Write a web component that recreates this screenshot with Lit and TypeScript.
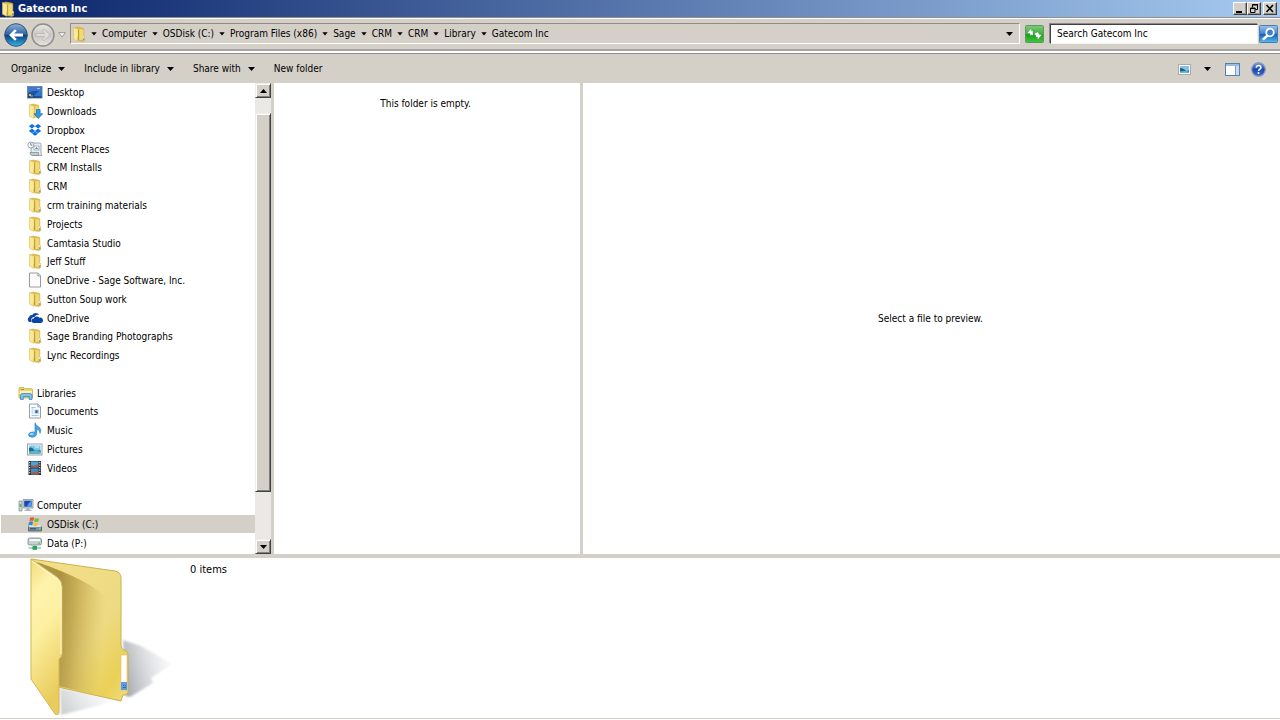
import { LitElement, html, svg, css } from "lit";
import { customElement } from "lit/decorators.js";

const arrow = html`<svg class="arrow" width="7" height="4" viewBox="0 0 7 4" aria-hidden="true"><path d="M0 0h7L3.5 4z" fill="#000" /></svg>`;
const crumbArrow = html`<svg class="arrow" width="6" height="4" viewBox="0 0 6 4" aria-hidden="true"><path d="M0.3 0.3h5.4L3 3.6z" fill="#000" /></svg>`;

const icons: Record<string, unknown> = {
  folder: svg`
    <path d="M3 2 6 1l6 1.200q.8.2.8 1v6.600l.8.800v4l-1.600.8L6 14.600z" fill="#dcbc4c" stroke="#cdae48" stroke-width=".6"/>
    <path d="M8.300 3 12.300 3.500v10.200L8.300 14z" fill="#f0d978"/>
    <path d="M2.500 1.500 6.400 3q.8.5.8 1.300v6.200l-.5.700v4L2.500 13.200z" fill="#faea98" stroke="#dcc05a" stroke-width=".6"/>
    <path d="M7.500 4v10" stroke="#b8962e" stroke-width=".8"/>
    <path d="M12.300 10.500h1v1.800h-1z" fill="#fff"/><path d="M12.300 12.300h1v1.600h-1z" fill="#5a8fc8"/>`,
  desktop: svg`
    <rect x=".5" y="2.500" width="14.500" height="11.500" fill="#1d4fa0" stroke="#6c87b0"/>
    <path d="M1 3h13.500v5Q8 5 1 9z" fill="#3f79cf"/><path d="M6 13.500Q10 7 14.500 6v7.500z" fill="#2f8be0" opacity=".7"/>
    <path d="M1 12.500h13.500v1H1z" fill="#16264a"/><path d="M2 10h2v2H2z" fill="#e8c24a"/><path d="M3 11.500h3v1H3z" fill="#8fd36a"/>
    <path d="M10 4h3v1h-3z" fill="#9fc4f0"/>`,
  downloads: svg`
    <path d="M3 2 6 1l5 1.200q.8.2.8 1V14L6 14.600z" fill="#dcbc4c" stroke="#cdae48" stroke-width=".6"/>
    <path d="M8.300 3 11.500 3.500v10L8.300 14z" fill="#f0d978"/>
    <path d="M2.500 1.500 6.400 3q.8.5.8 1.300v6.200l-.5.700v4L2.500 13.200z" fill="#faea98" stroke="#dcc05a" stroke-width=".6"/>
    <path d="M9.500 6.500h3.600v4.200h2.500L11.300 15.500 7 10.700h2.500z" fill="#2c9be6" stroke="#1769ad" stroke-width=".7"/>`,
  dropbox: svg`<g fill="#0d6fea"><path d="M5 2 8.200 4.300 5 6.600 1.800 4.300z"/><path d="M11 2 14.200 4.300 11 6.600 7.800 4.300z"/><path d="M5 6.600 8.200 8.900 5 11.200 1.800 8.900z"/><path d="M11 6.600 14.200 8.900 11 11.200 7.800 8.900z"/><path d="M8 9.600 11 11.700 8 13.800 5 11.700z"/></g>
    <path d="M8 4.600 10.800 6.600 8 8.600 5.200 6.600z" fill="#fff"/>`,
  recent: svg`
    <path d="M4.500 2h8q1.500 0 1.500 1.500v9l1 2H6l-2-2z" fill="#e8edf1" stroke="#8d989f" stroke-width=".8"/>
    <path d="M7 5h5v4H7z" fill="#fff" stroke="#7f97a6" stroke-width=".7"/><path d="M8 8 9.500 6l1 1 1 1z" fill="#5d8fae"/>
    <path d="M3 11.500h8.500v3H5q-2-.5-2-3z" fill="#c2ccd2" stroke="#77838b" stroke-width=".7"/>
    <circle cx="3.800" cy="4" r="3" fill="#f5fafc" stroke="#849199" stroke-width=".8"/><path d="M3.800 2v2.200h1.600" fill="none" stroke="#456" stroke-width=".7"/>`,
  file: svg`<path d="M2.500 1h8.500L13.500 3.800V15h-11z" fill="#fdfdfd" stroke="#8f8f8f" stroke-width=".9"/><path d="M10.800 1.200V4h2.600" fill="#e4e4e4" stroke="#8f8f8f" stroke-width=".8"/>`,
  onedrive: svg`
    <path d="M2.500 12A2.700 2.700 0 0 1 2 7.200 3 3 0 0 1 5.200 5 4 4 0 0 1 12.200 5q-3.200-1-4.700 2-3.500.3-3.500 3.400 0 1 .5 1.600z" fill="#0a46a8"/>
    <path d="M6.500 13A2.300 2.300 0 0 1 6.800 8.400 3.200 3.200 0 0 1 12.400 7.800 2.700 2.700 0 0 1 14 13z" fill="#0a46a8"/>`,
  libraries: svg`
    <path d="M1 3.500q0-1 1-1h4l1 1.200h6.500q1 0 1 1V13H1z" fill="#f1d472" stroke="#c9a545" stroke-width=".8"/>
    <path d="M1.500 6h12.500v3H1.500z" fill="#fff1b0"/><path d="M3 4h3v1H3z" fill="#62ad58"/>
    <path d="M2.500 14.500V10.500q0-2 2-2h7.500q2 0 2 2v4h-2.800V11.500H5.300v3z" fill="#7ec2ee" stroke="#3c88bd" stroke-width=".8"/>`,
  documents: svg`<path d="M2.500 1h8.500L13.500 3.800V15h-11z" fill="#fcfdff" stroke="#8795a3" stroke-width=".9"/><path d="M10.800 1.200V4h2.600" fill="#dce4ec" stroke="#8795a3" stroke-width=".8"/>
    <path d="M4.500 4.500h4M4.500 6h2M4.500 8h2M4.500 10h2M4.500 12.500h7" stroke="#8fb0cf" stroke-width=".8"/><path d="M7.500 6.500h4.300v4.300H7.500z" fill="#a8cdf0"/><path d="M8.400 7.300h2.200v2.600H8.400z" fill="#2a5f9d"/>`,
  music: svg`<path d="M8 .8q.5 2.500 3.500 4 3.500 2 1.500 6.700.3-3.500-3.300-4.200V12Q9 15 5.500 15.200 1.500 15 1.500 12.700 2 10 5.500 9.900q1.500 0 2.500.5z" fill="#3fa6e6" stroke="#1f77b8" stroke-width=".6"/><ellipse cx="4.600" cy="12" rx="2" ry="1.100" fill="#a5dafa"/>`,
  pictures: svg`<rect x=".5" y="3" width="14.500" height="11" fill="#fafafa" stroke="#8f979e" stroke-width=".9"/><path d="M2 4.500h11.500v8H2z" fill="#79c5ef"/><path d="M2 7q3-1.500 4.500 1.200T13.500 9v3.500H2z" fill="#1e6a86"/><path d="M2 10.500q5-1.500 11.500 0v2H2z" fill="#57b8c8"/><path d="M8 5.500h4v1H8z" fill="#e9f7ff"/>`,
  videos: svg`<rect x="1.500" y="1" width="12.500" height="14" fill="#283038"/><path d="M4 1.500h7.500v6H4z" fill="#4da3d8"/><path d="M4 8.500h7.500v6H4z" fill="#3c8cc8"/><path d="M4 5q3 2 7.500-1v3.500H4zM4 12q4 2 7.500-1v3.500H4z" fill="#a65a38"/>
    <path d="M2.700 2v12.500M12.800 2v12.500" stroke="#dfe5ea" stroke-width="1.100" stroke-dasharray="1.200 1.300"/>`,
  computer: svg`<path d="M5 2.500h10v8.500H5z" fill="#d6dbe0" stroke="#84909a" stroke-width=".8"/><path d="M6.200 3.700h7.600v6H6.200z" fill="#1546b4"/><path d="M9 9.700q1-4.500 4.800-6v6z" fill="#5d94ea"/><path d="M8.500 11h3v1.800h2V14h-7v-1.200h2z" fill="#aab3ba"/>
    <path d="M1 4h3v10H1z" fill="#cdd4d8" stroke="#7c8890" stroke-width=".7"/><path d="M1.500 7h2v3h-2z" fill="#4fc05a"/>`,
  osdisk: svg`<path d="M1.500 10.500h13V15h-13z" fill="#7c94a8" stroke="#4d5b66" stroke-width=".8"/><path d="M3 9h10l1.500 2h-13z" fill="#dce3e8"/><path d="M3 12.300h6v1H3z" fill="#2f4558"/><path d="M12 12h1.500v1.500H12z" fill="#56e356"/>
    <path d="M3.200 1.800q2-1.200 4-.2L6.300 5q-2-1-4 .2z" fill="#e8562c"/><path d="M8 2q2 1 4.200 0l-1 3.600q-2 .8-4-.2z" fill="#79b83a"/><path d="M2.100 6q2-1.200 4-.2L5.200 9.400q-2-1-4 .2z" fill="#3c86d8"/><path d="M6.900 6.200q2 1 4.200 0l-1 3.600q-2 .8-4-.2z" fill="#f6c22e"/>`,
  data: svg`<path d="M1 5q0-2 2-2h9.500q2 0 2 2v3.500q0 1.500-2 1.500H3q-2 0-2-1.500z" fill="#c9cfd3" stroke="#76818a" stroke-width=".8"/><path d="M2.500 4.300h10.500v1.600H2.500z" fill="#fff"/><path d="M11 7.500h2v1.200h-2z" fill="#45d14c"/>
    <path d="M6.500 10h2.500v2H14v1.800H1.500V12h5z" fill="#9bd7ae"/><path d="M5.500 11h4.500v3.800H5.500z" fill="#28a35a"/>`,
};

const icon = (name: string) => html`<svg class="icon" width="16" height="16" viewBox="0 0 16 16" aria-hidden="true">${icons[name]}</svg>`;

type Row = { label: string; icon: string; root?: boolean; selected?: boolean } | null;
const f = (label: string, name = "folder"): Row => ({ label, icon: name });
const rows: Row[] = [
  f("Desktop", "desktop"), f("Downloads", "downloads"), f("Dropbox", "dropbox"), f("Recent Places", "recent"),
  f("CRM Installs"), f("CRM"), f("crm training materials"), f("Projects"), f("Camtasia Studio"), f("Jeff Stuff"),
  f("OneDrive - Sage Software, Inc.", "file"), f("Sutton Soup work"), f("OneDrive", "onedrive"),
  f("Sage Branding Photographs"), f("Lync Recordings"), null,
  { label: "Libraries", icon: "libraries", root: true },
  f("Documents", "documents"), f("Music", "music"), f("Pictures", "pictures"), f("Videos", "videos"), null,
  { label: "Computer", icon: "computer", root: true },
  { label: "OSDisk (C:)", icon: "osdisk", selected: true }, f("Data (P:)", "data"),
];
const crumbs = ["Computer", "OSDisk (C:)", "Program Files (x86)", "Sage", "CRM", "CRM", "Library", "Gatecom Inc"];

@customElement("app-root")
export class AppRoot extends LitElement {
  static styles = css`
    :host { display: flex; flex-direction: column; height: 100vh; background: #fff; color: #000;
      font: 10px/14px "DejaVu Sans Condensed", "DejaVu Sans", sans-serif; }
    *, *::before { box-sizing: border-box; }
    button { font: inherit; color: inherit; background: none; border: 0; padding: 0; margin: 0; display: flex; align-items: center; white-space: nowrap; }
    svg { display: block; flex: none; }

    .title { display: flex; align-items: center; height: 17px; flex: none; padding-right: 3px;
      background: linear-gradient(90deg, #0a246a, #a6caf0); }
    .title h1 { margin: 0; flex: 1; font-size: 11px; font-weight: bold; line-height: 16px; color: #fff; }
    .title .icon { margin-right: 2px; }
    .win { width: 14px; height: 13px; justify-content: center; background: #d4d0c8; border: 1px solid; border-color: #fff #404040 #404040 #fff; box-shadow: inset -1px -1px #9a968e; }
    .close { margin-left: 2px; }

    .nav { display: flex; align-items: center; flex: none; height: 34px; background: #d4d0c8; padding: 0 2px 0 4px;
      border-top: 1px solid #8e8e8e; border-bottom: 2px solid #a8a6a2; box-shadow: inset 0 1px #fff; }
    .history { margin-right: 4px; padding-top: 2px; gap: 3px; display: flex; align-items: center; }
    .wheel { border-radius: 50%; }
    .address { display: flex; align-items: center; flex: 1; height: 21px; padding-right: 6px;
      border: 1px solid; border-color: #8f8c86 #fff #fff #8f8c86; }
    .address ol { display: flex; list-style: none; margin: 0 auto 0 4px; padding: 0; }
    .address li { display: flex; align-items: center; gap: 4px; margin-right: 5px; }
    .address a { color: inherit; text-decoration: none; white-space: nowrap; }
    .refresh { width: 19px; margin: 0 6px 0 5px; }
    .search { flex: 0 0 208px; display: flex; }
    .search input { width: 100%; height: 20px; font: inherit; color: #000; padding: 0 6px; border: 1px solid; outline: 0; border-radius: 0; background: #fff;
      border-color: #404040 #f4f2ee #f4f2ee #404040; box-shadow: -1px -1px #8a8a8a; }
    .search input::placeholder { color: #000; opacity: 1; }
    .go { margin-left: 1px; }

    .tools { display: flex; align-items: center; flex: none; height: 32px; padding: 2px 14px 0 11px; gap: 19px; background: #d4d0c8;
      border-top: 2px solid #fff; box-shadow: inset 0 1px #8e8e8e; }
    .tools button { gap: 7px; }
    .tools .view { margin-left: auto; gap: 13px; margin-right: -5px; }
    .tools .help { margin-left: -8px; }

    .body { display: flex; flex: 1; min-height: 0; }
    .tree { display: flex; flex-direction: column; width: 255px; flex: none; list-style: none; margin: 0; padding: 0 0 2px; }
    .tree li { flex: 1; min-height: 0; display: flex; align-items: center; }
    .tree a { display: flex; align-items: center; gap: 4px; flex: 1; height: 100%; margin-left: 1px; padding-left: 26px; color: inherit; text-decoration: none; white-space: nowrap; }
    .tree a.root { padding-left: 17px; gap: 3px; }
    .tree a.selected { background: #d4d0c8; }
    .tree span { padding-top: 2px; }

    .scroll { display: flex; flex-direction: column; width: 16px; flex: none; background: #ebe9e5; }
    .raised { background: #d4d0c8; border: 1px solid; border-color: #f0eeea #404040 #404040 #f0eeea; box-shadow: inset 1px 1px #fff, inset -1px -1px #808080; }
    .scroll button { height: 15px; flex: none; justify-content: center; }
    .before { flex: 15; }
    .thumb { flex: 378; }
    .after { flex: 47; }
    .split { width: 3px; flex: none; background: #d4d0c8; }

    .list { flex: 0 0 306px; text-align: center; padding: 14px 3px 0 0; }
    .list p, .preview p { margin: 0; }
    .preview { flex: 1; display: grid; place-items: center; padding-right: 2px; }

    .details { display: flex; align-items: flex-start; flex: none; gap: 17px; padding-left: 29px; height: 166px;
      border-top: 4px solid #d4d0c8; background: linear-gradient(#d4d0c8, #d4d0c8) 0 160px / 100% 1px no-repeat; }
    .details p { margin: 5px 0 0; font-size: 11px; }
  `;

  render() {
    return html`
      <header class="title">
        ${icon("folder")}
        <h1>Gatecom Inc</h1>
        <button class="win" aria-label="Minimize"><svg width="10" height="9" viewBox="0 0 10 9"><path d="M1 7h6v2H1z" /></svg></button>
        <button class="win" aria-label="Restore"><svg width="10" height="9" viewBox="0 0 10 9"><path d="M3.500 3.500v-3h5v5h-2M3 1h6M1.500 4h4.500v4.500H1.500zM1 4.500h5.500" fill="none" stroke="#000" /></svg></button>
        <button class="win close" aria-label="Close"><svg width="10" height="9" viewBox="0 0 10 9"><path d="M1.500 1 8 8M8 1 1.500 8" stroke="#000" stroke-width="1.600" /></svg></button>
      </header>

      <nav class="nav" aria-label="Address">
        <div class="history">
          <button class="wheel" aria-label="Back">
            <svg width="24" height="24" viewBox="0 0 24 24">
              <defs><linearGradient id="b" x2="0" y2="1"><stop stop-color="#8fb2d9" /><stop offset=".48" stop-color="#2b5f9e" /><stop offset=".52" stop-color="#0d3f7c" /><stop offset="1" stop-color="#35b6f0" /></linearGradient></defs>
              <circle cx="12" cy="12" r="11.300" fill="url(#b)" stroke="#38536f" stroke-width="1" />
              <path d="M5 12 11 6.200l1.800 1.700-2.700 2.600H19v3h-8.900l2.700 2.600L11 17.800z" fill="#fff" />
            </svg>
          </button>
          <button class="wheel" aria-label="Forward">
            <svg width="24" height="24" viewBox="0 0 24 24">
              <defs><linearGradient id="g" x2="0" y2="1"><stop stop-color="#e9e8e6" /><stop offset=".5" stop-color="#c9c7c3" /><stop offset="1" stop-color="#e4e3df" /></linearGradient></defs>
              <circle cx="12" cy="12" r="11" fill="url(#g)" stroke="#8d8d8d" stroke-width="1.400" />
              <path d="M19 12 13 6.200l-1.800 1.700 2.700 2.600H5v3h8.900l-2.700 2.600L13 17.800z" fill="#dedddb" stroke="#b3b1ae" stroke-width=".7" />
            </svg>
          </button>
          <button aria-label="Recent locations"><svg width="8" height="6" viewBox="0 0 8 6"><path d="M.7.700h6.600L4 5z" fill="#fff" stroke="#8c8c8c" stroke-width=".9" /></svg></button>
        </div>
        <div class="address">
          ${icon("folder")}
          <ol>
            <li>${crumbArrow}</li>
            ${crumbs.map((c, i) => html`<li><a href="#">${c}</a></li>${i < crumbs.length - 1 ? html`<li>${crumbArrow}</li>` : ""}`)}
          </ol>
          <button aria-label="Previous locations">${arrow}</button>
        </div>
        <button class="refresh" aria-label="Refresh">
          <svg width="19" height="18" viewBox="0 0 19 18">
            <defs><linearGradient id="r" x2="0" y2="1"><stop stop-color="#7fca7f" /><stop offset=".5" stop-color="#3fae41" /><stop offset=".52" stop-color="#1e9a22" /><stop offset="1" stop-color="#3ec93c" /></linearGradient></defs>
            <rect x=".5" y=".5" width="18" height="17" rx="1" fill="url(#r)" stroke="#5f9a60" />
            <path d="M1.800 8.500 6.500 3v3L8 5.500v5L6.500 10 5 10.500V8.500zM17.200 9.500 12.500 15v-3l-1.500.5v-2q-1-1-2-1 1-2.500 4-2.500l1.500 2.500z" fill="#fff" stroke="#3b8f3d" stroke-width=".4" />
          </svg>
        </button>
        <div class="search"><input type="text" aria-label="Search Gatecom Inc" placeholder="Search Gatecom Inc" /></div>
        <button class="go" aria-label="Search">
          <svg width="19" height="18" viewBox="0 0 19 18">
            <defs><linearGradient id="s" x2="0" y2="1"><stop stop-color="#9cc4ee" /><stop offset=".5" stop-color="#3d7fd0" /><stop offset=".52" stop-color="#1c5cb8" /><stop offset="1" stop-color="#4fc0f4" /></linearGradient></defs>
            <rect x=".5" y=".5" width="18" height="17" rx="1" fill="url(#s)" stroke="#4a7ab5" />
            <path d="M8.500 10.500 4.500 14" stroke="#fff" stroke-width="2.400" stroke-linecap="round" /><circle cx="11" cy="7.500" r="3.800" fill="#3d7fd0" stroke="#fff" stroke-width="1.800" />
          </svg>
        </button>
      </nav>

      <div class="tools" role="toolbar">
        <button>Organize ${arrow}</button>
        <button>Include in library ${arrow}</button>
        <button>Share with ${arrow}</button>
        <button>New folder</button>
        <button class="view" aria-label="Change your view">
          <svg width="13" height="11" viewBox="0 0 13 11"><rect x=".5" y=".5" width="12" height="10" fill="#fff" stroke="#a3abb3" /><path d="M2 2h9v7H2z" fill="#86c3e8" /><path d="M2 4q3 0 5 2t4 0v3H2z" fill="#22607c" /><path d="M2 7.500q5-1 9 0V9H2z" fill="#6bbcc9" /></svg>
          ${arrow}
        </button>
        <button aria-label="Hide the preview pane">
          <svg width="15" height="13" viewBox="0 0 15 13"><rect x=".5" y=".5" width="14" height="12" fill="#fff" stroke="#5b7fa8" /><path d="M1 1h13v2H1z" fill="#9dbbe0" /><path d="M11 3h3v9h-3z" fill="#c5dcf4" /><path d="M10.500 3v9" stroke="#7a9cc4" /></svg>
        </button>
        <button class="help" aria-label="Get help">
          <svg width="15" height="15" viewBox="0 0 15 15">
            <defs><linearGradient id="h" x2="0" y2="1"><stop stop-color="#6e9be0" /><stop offset=".5" stop-color="#1d48ae" /><stop offset="1" stop-color="#3a6fd2" /></linearGradient></defs>
            <circle cx="7.500" cy="7.500" r="6.800" fill="url(#h)" stroke="#8b9dbd" stroke-width="1.200" />
            <path d="M5.300 5.800q0-2.200 2.300-2.200t2.300 1.900q0 1.100-1.200 1.800t-1.200 1.600" fill="none" stroke="#fff" stroke-width="1.500" /><circle cx="7.500" cy="11" r="1" fill="#fff" />
          </svg>
        </button>
      </div>

      <main class="body">
        <ul class="tree">
          ${rows.map((r) => r
            ? html`<li><a href="#" class="${r.root ? "root" : ""} ${r.selected ? "selected" : ""}">${icon(r.icon)}<span>${r.label}</span></a></li>`
            : html`<li role="presentation"></li>`)}
        </ul>
        <div class="scroll">
          <button class="raised" aria-label="Scroll up"><svg width="7" height="4" viewBox="0 0 7 4"><path d="M0 4h7L3.500 0z" /></svg></button>
          <div class="before"></div>
          <div class="thumb raised"></div>
          <div class="after"></div>
          <button class="raised" aria-label="Scroll down">${arrow}</button>
        </div>
        <div class="split"></div>
        <section class="list"><p>This folder is empty.</p></section>
        <div class="split"></div>
        <section class="preview"><p>Select a file to preview.</p></section>
      </main>

      <footer class="details">
        <svg width="144" height="160" viewBox="0 0 144 160" aria-hidden="true">
          <defs>
            <linearGradient id="back" x1="0" y1="0" x2="1" y2="1"><stop stop-color="#f3df86" /><stop offset=".6" stop-color="#eddb84" /><stop offset=".85" stop-color="#ead056" /><stop offset="1" stop-color="#efdc80" /></linearGradient>
            <linearGradient id="fold" gradientUnits="userSpaceOnUse" x1="28" y1="60" x2="76" y2="64"><stop stop-color="#8f7424" stop-opacity=".7" /><stop offset=".3" stop-color="#a48732" stop-opacity=".6" /><stop offset="1" stop-color="#c7aa48" stop-opacity="0" /></linearGradient>
            <linearGradient id="front" x1="0" y1="0" x2=".25" y2="1"><stop stop-color="#f1dc7c" /><stop offset=".25" stop-color="#fff3ac" /><stop offset=".5" stop-color="#fdf0a2" /><stop offset="1" stop-color="#e9cc5c" /></linearGradient>
            <linearGradient id="shade" x1="0" y1=".6" x2="1" y2=".3"><stop stop-color="#a9adb2" /><stop offset="1" stop-color="#d8dadd" stop-opacity=".1" /></linearGradient>
            <filter id="soft"><feGaussianBlur stdDeviation="1" /></filter>
          </defs>
          <g filter="url(#soft)">
            <path d="M94 82 112 88 143 106 122 120 124 125 101 139 96 138z" fill="url(#shade)" />
            <path d="M31 130 88 142 60 150 32 157z" fill="url(#shade)" opacity=".55" />
          </g>
          <path d="M2 1 86 13q6 1 6 7v68q0 3 3 4t4 4v37q0 4-5 4l-2 6-63-14z" fill="url(#back)" stroke="#cdb04c" />
          <path d="M8 4Q60 22 78 40v99L29 128V40z" fill="url(#fold)" />
          <path d="M92 97h6v35h-6z" fill="#fff" stroke="#dcc56c" stroke-width=".6" /><path d="M92 124h6v8h-6z" fill="#5b9cf0" /><path d="M94 127h1v1h-1zM96 127h1v1h-1zM94 129h3v1h-3z" fill="#2a66c4" />
          <path d="M2 1 28 19q5 4 5 9v69q0 2-3 4v53q0 4-4 2L2 121z" fill="url(#front)" stroke="#d3b655" />
          <path d="M3 3 27 20q5 4 5 9v67" fill="none" stroke="#fff9d8" />
        </svg>
        <p>0 items</p>
      </footer>
    `;
  }
}
